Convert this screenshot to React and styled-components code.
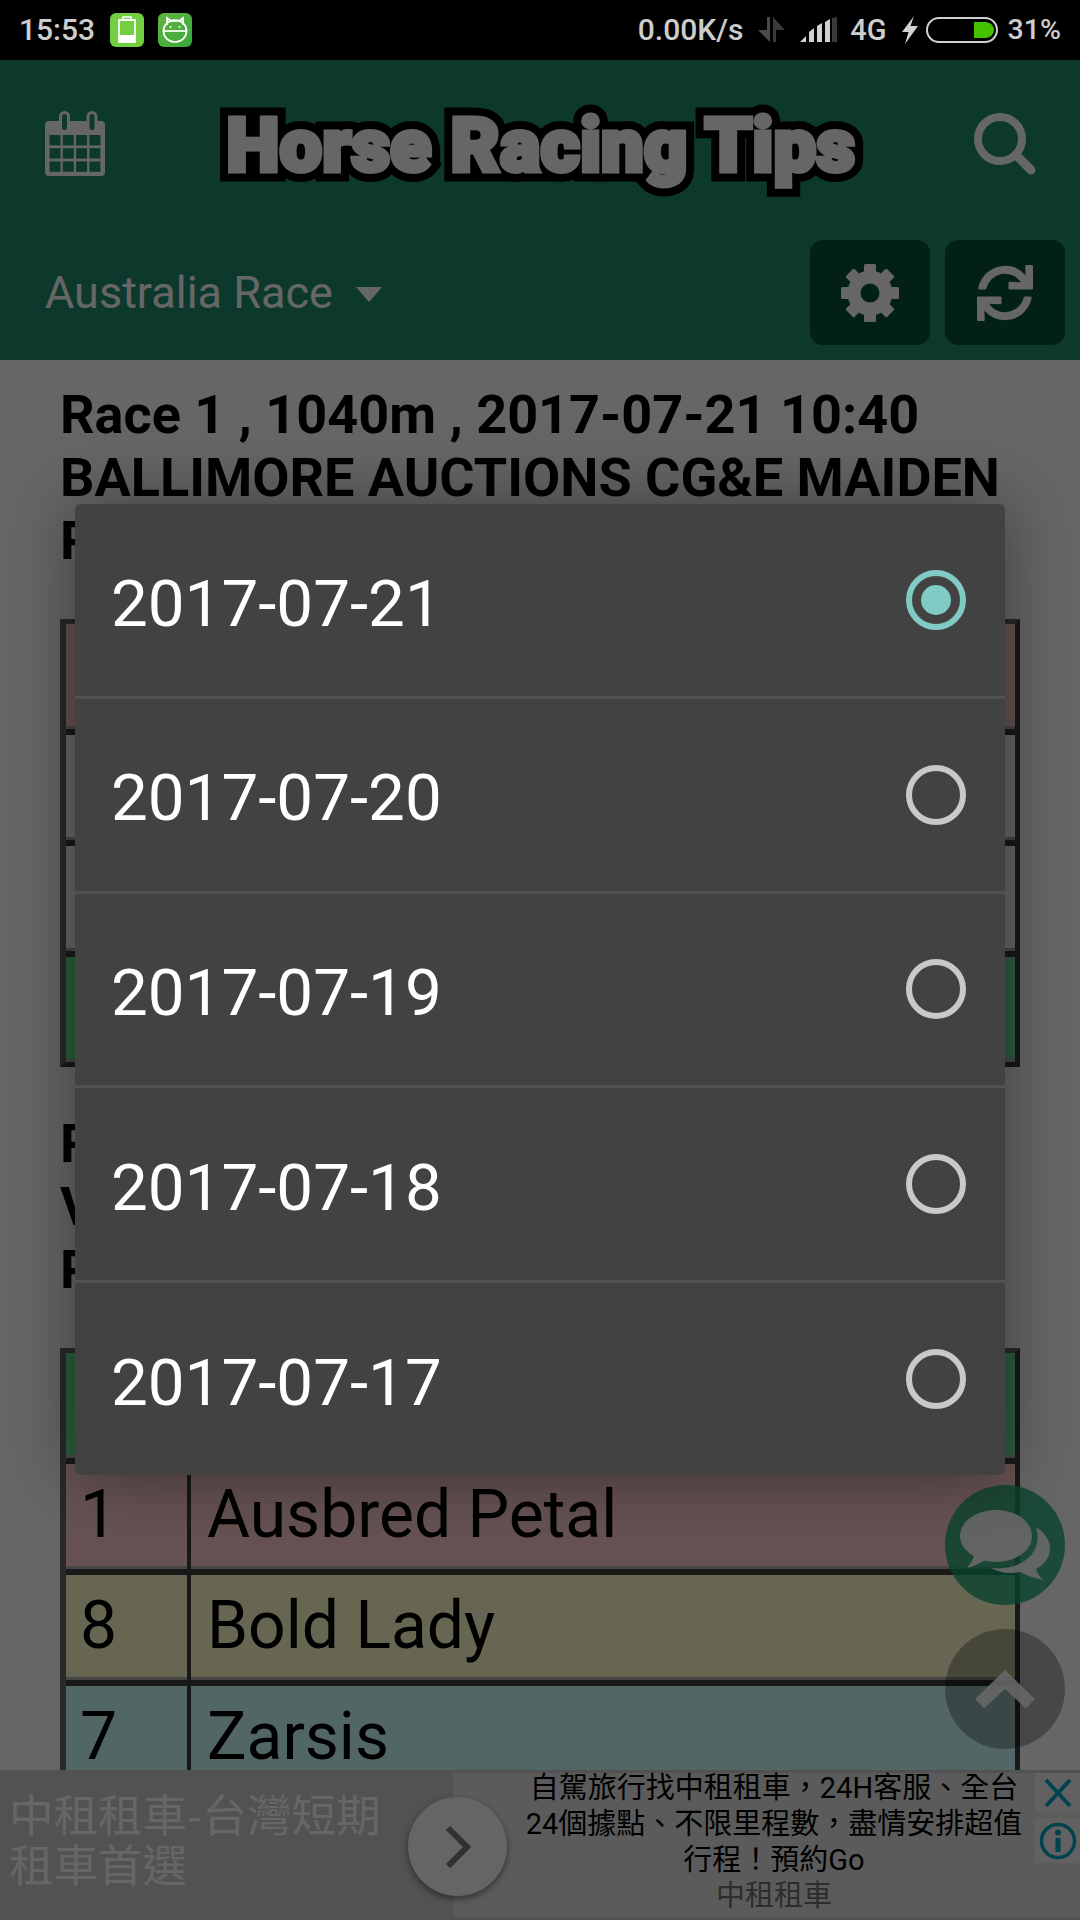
import React from "react";
import styled, { createGlobalStyle } from "styled-components";
import { FaSync } from "react-icons/fa";

const Global = createGlobalStyle`
  html, body { margin: 0; padding: 0; background: #000; }
  #root { width: 1080px; height: 1920px; overflow: hidden; }
  * { box-sizing: border-box; }
`;

const Page = styled.div`
  width: 1080px;
  height: 1920px;
  display: flex;
  flex-direction: column;
  font-family: Roboto, "Noto Sans CJK TC", sans-serif;
`;

/* ---------- status bar ---------- */
const StatusBar = styled.div`
  height: 60px;
  flex: none;
  background: #000;
  display: flex;
  align-items: center;
  padding: 0 19px;
  color: #cdcdcd;
`;
const StatusText = styled.span`
  font-size: ${(p) => p.$size || 30}px;
  font-weight: 500;
  line-height: 60px;
  margin-left: ${(p) => p.$gap || 0}px;
`;
const AppBadge = styled.div`
  width: 34px;
  height: 34px;
  border-radius: 6px;
  margin-left: ${(p) => p.$gap}px;
  background: ${(p) => p.$bg};
  display: flex;
  align-items: center;
  justify-content: center;
`;
const Spacer = styled.div`
  flex: 1;
`;
const StatusGlyph = styled.svg`
  display: block;
  flex: none;
  margin-left: ${(p) => p.$gap}px;
`;

/* ---------- screen under the dialog ---------- */
const Screen = styled.div`
  position: relative;
  flex: 1;
  min-height: 0;
  display: flex;
  flex-direction: column;
  background: #fff;
  overflow: hidden;
`;
const Header = styled.header`
  flex: none;
  height: 300px;
  background: #208e6b;
  display: flex;
  flex-direction: column;
  color: #fff;
`;
const TopRow = styled.div`
  height: 180px;
  padding: 0 44px 12px 45px;
  display: flex;
  align-items: center;
  justify-content: space-between;
`;
const Logo = styled.h1`
  position: relative;
  margin: 2px 0 0 3px;
  font-family: Roboto, sans-serif;
  font-weight: 900;
  font-size: 75px;
  line-height: 80px;
  letter-spacing: 0.5px;
  color: #fff;
  white-space: nowrap;
  -webkit-text-stroke: 5px #fff;
  z-index: 0;
  &::before {
    content: attr(data-text);
    position: absolute;
    left: 0;
    top: 0;
    z-index: -1;
    -webkit-text-stroke: 21px #000;
    color: #000;
  }
`;
const BottomRow = styled.div`
  height: 105px;
  padding: 0 15px 0 45px;
  display: flex;
  align-items: center;
  gap: 15px;
`;
const RaceSelect = styled.div`
  flex: 1;
  display: flex;
  align-items: center;
  gap: 23px;
  font-size: 45px;
  font-weight: 400;
`;
const Caret = styled.span`
  width: 0;
  height: 0;
  border-left: 13px solid transparent;
  border-right: 13px solid transparent;
  border-top: 15px solid #fff;
  margin-top: 4px;
`;
const ToolButton = styled.button`
  width: 120px;
  height: 105px;
  padding: 0;
  border: 0;
  border-radius: 13px;
  background: #085237;
  color: #fff;
  display: flex;
  align-items: center;
  justify-content: center;
`;

const Content = styled.main`
  flex: 1;
  min-height: 0;
  overflow: hidden;
  padding: 23px 60px 0;
  background: #fff;
`;
const RaceTitle = styled.h2`
  margin: 0 0 47px 0;
  font-size: 54px;
  font-weight: 700;
  line-height: 63px;
  color: #000;
  height: 189px;
  width: 960px;
`;
const Sheet = styled.div`
  width: 960px;
  margin-bottom: 45px;
  background: #fff;
  border-style: solid;
  border-width: 5px 5px 5px 6px;
  border-color: #666 #3c3c3c #3c3c3c #666;
`;
const SheetRow = styled.div`
  display: grid;
  grid-template-columns: 121px 1fr;
  column-gap: 4px;
  background: #3c3c3c;
  padding-bottom: 6px;
  &:last-child {
    padding-bottom: 0;
  }
`;
const Cell = styled.div`
  height: 105px;
  background: ${(p) => p.$bg};
  font-size: 66px;
  line-height: 101px;
  padding-left: ${(p) => p.$pad}px;
  color: #000;
  white-space: nowrap;
  box-shadow: inset 0 -3px 0 #b0b0b0;
`;

const FloatButton = styled.div`
  position: absolute;
  right: 15px;
  top: ${(p) => p.$top}px;
  width: 120px;
  height: 120px;
  border-radius: 50%;
  background: ${(p) => p.$bg};
  display: flex;
  align-items: center;
  justify-content: center;
`;

/* ---------- ad ---------- */
const AdBar = styled.aside`
  flex: none;
  height: 150px;
  background: #cdcdcd;
  display: flex;
  position: relative;
`;
const AdHeadline = styled.div`
  width: 408px;
  padding: 18px 0 0 9px;
  font-size: 44.5px;
  line-height: 50px;
  color: #fff;
  white-space: nowrap;
  font-family: "Noto Sans CJK TC", sans-serif;
  font-weight: 400;
`;
const AdArrow = styled.div`
  position: absolute;
  z-index: 1;
  left: 408px;
  top: 27px;
  width: 99px;
  height: 99px;
  border-radius: 50%;
  background: #fdfdfd;
  box-shadow: 0 3px 7px rgba(0, 0, 0, 0.45);
  display: flex;
  align-items: center;
  justify-content: center;
`;
const AdPanel = styled.div`
  position: absolute;
  left: 453px;
  right: 0;
  top: 3px;
  bottom: 3px;
  background: #e4e4e4;
  display: flex;
`;
const AdCopy = styled.div`
  flex: 1;
  padding: 0 0 0 60px;
  text-align: center;
  font-size: 29px;
  line-height: 36px;
  color: #000;
  margin-top: -3px;
`;
const AdBrand = styled.div`
  color: #707070;
`;
const AdTools = styled.div`
  flex: none;
  width: 45px;
  display: flex;
  flex-direction: column;
  gap: 5px;
`;
const AdTool = styled.div`
  height: ${(p) => p.$h}px;
  background: #f2f2f2;
  display: flex;
  align-items: center;
  justify-content: center;
`;

/* ---------- modal ---------- */
const Scrim = styled.div`
  position: absolute;
  inset: 0;
  z-index: 5;
  background: rgba(0, 0, 0, 0.6);
  padding: 444px 75px 0;
`;
const Dialog = styled.div`
  height: 971px;
  border-radius: 6px;
  background: #424242;
  box-shadow: 0 0 70px rgba(0, 0, 0, 0.4);
  display: flex;
  flex-direction: column;
`;
const DateRow = styled.div`
  flex: 1;
  display: flex;
  align-items: center;
  justify-content: space-between;
  padding: 0 39px 0 36px;
  border-bottom: 3px solid #525252;
  &:last-child {
    border-bottom: 0;
  }
`;
const DateLabel = styled.span`
  font-size: 65.5px;
  color: #fff;
  line-height: 1;
  padding-top: 7px;
`;
const Radio = styled.span`
  width: 60px;
  height: 60px;
  border-radius: 50%;
  border: 6px solid ${(p) => (p.$on ? "#80cbc4" : "#c9c9c9")};
  display: flex;
  align-items: center;
  justify-content: center;
  &::after {
    content: "";
    width: 30px;
    height: 30px;
    border-radius: 50%;
    background: ${(p) => (p.$on ? "#80cbc4" : "transparent")};
  }
`;

const PINK = "#ffcccc";
const OLIVE = "#ffffcc";
const TEAL = "#ccffff";
const GREEN = "#6ce898";
const WHITE = "#ffffff";

const CalendarIcon = () => (
  <svg width="60" height="66" viewBox="0 0 60 66" style={{ display: "block" }}>
    <rect x="0" y="10" width="60" height="55" rx="4" fill="#fff" />
    {[0, 1, 2].map((r) =>
      [0, 1, 2, 3].map((c) => (
        <rect key={`${r}-${c}`} x={4.5 + c * 13.3} y={24 + r * 13.2} width="11" height="10.4" fill="#208e6b" />
      ))
    )}
    <rect x="15.5" y="1.5" width="8" height="19" rx="4" fill="#208e6b" stroke="#fff" strokeWidth="3" />
    <rect x="43" y="1.5" width="8" height="19" rx="4" fill="#208e6b" stroke="#fff" strokeWidth="3" />
  </svg>
);

const SearchIcon = () => (
  <svg width="62" height="62" viewBox="0 0 62 62" style={{ display: "block" }}>
    <circle cx="26" cy="26" r="22" fill="none" stroke="#fff" strokeWidth="8" />
    <line x1="42" y1="42" x2="57" y2="57" stroke="#fff" strokeWidth="9" strokeLinecap="round" />
  </svg>
);

const GearIcon = () => (
  <svg width="58" height="58" viewBox="-29 -29 58 58" style={{ display: "block" }}>
    <circle r="16" fill="none" stroke="#fff" strokeWidth="13" />
    {[0, 45, 90, 135, 180, 225, 270, 315].map((a) => (
      <rect key={a} x="-6" y="-29" width="12" height="10" rx="1.5" fill="#fff" transform={`rotate(${a})`} />
    ))}
  </svg>
);

const ChatIcon = () => (
  <svg width="90" height="72" viewBox="0 0 90 72" style={{ display: "block", marginTop: "2px" }} fill="rgba(255,255,255,.96)">
    <path d="M36 0 C56 0 72 11.6 72 26 C72 40.4 56 52 36 52 C32 52 28 51.5 24 50.6 C19 54 13 57 7 58 C10 54 13 50 14 46 C5.5 41.5 0 34 0 26 C0 11.6 16 0 36 0 Z" />
    <path d="M76 17 C84 22 90 30 90 38 C90 47 85 54 76 59 C77 63 80 67 83 70 C74 68 66 65 60 62 C50 64 40 63 31 58 C50 60 64 54 72 44 C78 36 79 26 76 17 Z" />
  </svg>
);

const ChevronUp = () => (
  <svg width="60" height="39" viewBox="0 0 60 39" style={{ display: "block" }}>
    <path d="M30 0 L60 29 L51 38.5 L30 19 L9 38.5 L0 29 Z" fill="rgba(255,255,255,.9)" />
  </svg>
);

const BatteryBadgeIcon = () => (
  <svg width="20" height="28" viewBox="0 0 20 28">
    <rect x="6" y="1" width="8" height="3" fill="none" stroke="#fff" strokeWidth="1.6" />
    <rect x="2" y="4" width="16" height="22" fill="none" stroke="#fff" strokeWidth="1.8" />
    <rect x="2" y="19" width="16" height="7" fill="#fff" />
  </svg>
);

const CatBadgeIcon = () => (
  <svg width="26" height="28" viewBox="0 0 26 28" fill="none" stroke="#fff" strokeWidth="1.7">
    <path d="M5 9 L5 2 L9 5 H17 L21 2 L21 9" />
    <ellipse cx="13" cy="15" rx="11.5" ry="11" />
    <path d="M2 15 H24" />
    <circle cx="8.5" cy="11" r="1" fill="#fff" stroke="none" />
    <circle cx="17.5" cy="11" r="1" fill="#fff" stroke="none" />
  </svg>
);

const rows1 = [PINK, WHITE, WHITE, GREEN].map((bg) => ({ bg, no: "", name: "" }));
const rows2 = [
  { bg: GREEN, no: "", name: "" },
  { bg: PINK, no: "1", name: "Ausbred Petal" },
  { bg: OLIVE, no: "8", name: "Bold Lady" },
  { bg: TEAL, no: "7", name: "Zarsis" },
];
const dates = ["2017-07-21", "2017-07-20", "2017-07-19", "2017-07-18", "2017-07-17"];

const RaceTable = ({ rows }) => (
  <Sheet>
    {rows.map((r, i) => (
      <SheetRow key={i}>
        <Cell $bg={r.bg} $pad={14}>{r.no}</Cell>
        <Cell $bg={r.bg} $pad={16}>{r.name}</Cell>
      </SheetRow>
    ))}
  </Sheet>
);

export default function App() {
  return (
    <Page>
      <Global />
      <StatusBar>
        <StatusText>15:53</StatusText>
        <AppBadge $gap={15} $bg="#74cf40"><BatteryBadgeIcon /></AppBadge>
        <AppBadge $gap={14} $bg="linear-gradient(135deg,#64b540,#36a83c)"><CatBadgeIcon /></AppBadge>
        <Spacer />
        <StatusText>0.00K/s</StatusText>
        <StatusGlyph $gap={15} width="27" height="26" viewBox="0 0 27 26">
          <path d="M9 0 H12 V25 L0 13 H9 Z" fill="#4a4a4a" />
          <path d="M15 25 H18 V13 H27 L15 0 Z" fill="#3a3a3a" />
        </StatusGlyph>
        <StatusGlyph $gap={15} width="37" height="26" viewBox="0 0 37 26">
          <path d="M0 25 L6 19 V25 Z M9 25 V15 L14 11 V25 Z M17 25 V9 L22 6 V25 Z M25 25 V5 L30 2 V25 Z" fill="#d2d2d2" />
          <path d="M32 25 V1 L37 0 V25 Z" fill="#3a3a3a" />
        </StatusGlyph>
        <StatusText $gap={13} $size={29}>4G</StatusText>
        <StatusGlyph $gap={15} width="16" height="28" viewBox="0 0 16 28">
          <path d="M12 0 L0 16 H6.5 L3 28 L16 10 H8.5 Z" fill="#d2d2d2" />
        </StatusGlyph>
        <StatusGlyph $gap={8} width="72" height="26" viewBox="0 0 72 26">
          <rect x="1" y="1" width="70" height="24" rx="12" fill="none" stroke="#cfcfcf" strokeWidth="2" />
          <path d="M48 5 H59 A9 8 0 0 1 68 13 A9 8 0 0 1 59 21 H48 Z" fill="#44c200" />
        </StatusGlyph>
        <StatusText $gap={10} $size={28.5}>31%</StatusText>
      </StatusBar>

      <Screen>
        <Header>
          <TopRow>
            <CalendarIcon />
            <Logo data-text="Horse Racing Tips">Horse Racing Tips</Logo>
            <SearchIcon />
          </TopRow>
          <BottomRow>
            <RaceSelect>Australia Race<Caret /></RaceSelect>
            <ToolButton aria-label="settings"><GearIcon /></ToolButton>
            <ToolButton aria-label="refresh"><FaSync size={56} /></ToolButton>
          </BottomRow>
        </Header>

        <Content>
          <RaceTitle>Race 1 , 1040m , 2017-07-21 10:40 BALLIMORE AUCTIONS CG&amp;E MAIDEN PLATE</RaceTitle>
          <RaceTable rows={rows1} />
          <RaceTitle>Race 2<br />V<br />P</RaceTitle>
          <RaceTable rows={rows2} />
        </Content>

        <FloatButton $top={1425} $bg="rgba(24,167,111,.8)"><ChatIcon /></FloatButton>
        <FloatButton $top={1569} $bg="rgba(0,0,0,.3)"><ChevronUp /></FloatButton>

        <AdBar>
          <AdHeadline>中租租車-台灣短期<br />租車首選</AdHeadline>
          <AdPanel>
            <AdCopy>
              自駕旅行找中租租車，24H客服、全台<br />
              24個據點、不限里程數，盡情安排超值<br />
              行程！預約Go
              <AdBrand>中租租車</AdBrand>
            </AdCopy>
            <AdTools>
              <AdTool $h={40}>
                <svg width="34" height="34" viewBox="0 0 34 34" fill="none" stroke="#00a5c0" strokeWidth="4">
                  <path d="M5 4 L29 30 M29 4 L5 30" />
                </svg>
              </AdTool>
              <AdTool $h={45}>
                <svg width="38" height="38" viewBox="0 0 38 38">
                  <circle cx="19" cy="19" r="16.5" fill="none" stroke="#00a5c0" strokeWidth="3.5" />
                  <circle cx="19" cy="10.5" r="3" fill="#00a5c0" />
                  <rect x="16.5" y="16" width="5" height="14" fill="#00a5c0" />
                </svg>
              </AdTool>
            </AdTools>
          </AdPanel>
          <AdArrow>
            <svg width="28" height="42" viewBox="0 0 28 42" fill="none" stroke="#7c7c7c" strokeWidth="6">
              <path d="M4 2 L23 21 L4 40" />
            </svg>
          </AdArrow>
        </AdBar>

        <Scrim>
          <Dialog>
            {dates.map((d, i) => (
              <DateRow key={d}>
                <DateLabel>{d}</DateLabel>
                <Radio $on={i === 0} />
              </DateRow>
            ))}
          </Dialog>
        </Scrim>
      </Screen>
    </Page>
  );
}
